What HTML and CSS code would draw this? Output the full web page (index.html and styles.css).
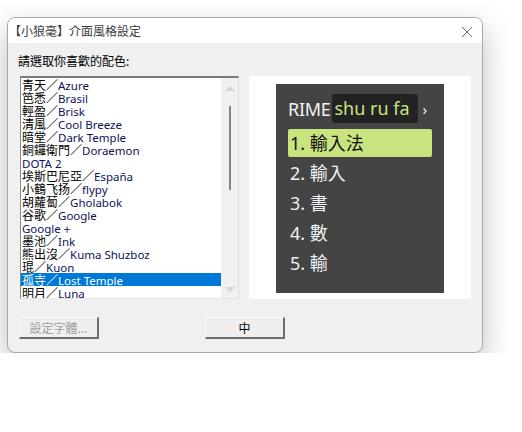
FILE: index.html
```html
<!DOCTYPE html>
<html>
<head>
<meta charset="utf-8">
<link rel="stylesheet" href="styles.css">
</head>
<body>
<div class="window">
  <div class="titlebar">
    <span class="title">【小狼毫】介面風格設定</span>
    <svg class="close" width="12" height="12" viewBox="0 0 12 12"><path d="M1 1 L11 11 M11 1 L1 11" stroke="#666" stroke-width="1" fill="none"/></svg>
  </div>
  <div class="body">
    <div class="label">請選取你喜歡的配色:</div>
    <div class="main">
      <div class="listbox">
        <div class="items">
          <div class="item">青天／<span class="lat">Azure</span></div>
          <div class="item">笆悉／<span class="lat">Brasil</span></div>
          <div class="item">輕盈／<span class="lat">Brisk</span></div>
          <div class="item">清風／<span class="lat">Cool Breeze</span></div>
          <div class="item">暗堂／<span class="lat">Dark Temple</span></div>
          <div class="item">銅鑼衛門／<span class="lat">Doraemon</span></div>
          <div class="item"><span class="lat">DOTA 2</span></div>
          <div class="item">埃斯巴尼亞／<span class="lat">España</span></div>
          <div class="item">小鶴飞扬／<span class="lat">flypy</span></div>
          <div class="item">胡蘿蔔／<span class="lat">Gholabok</span></div>
          <div class="item">谷歌／<span class="lat">Google</span></div>
          <div class="item"><span class="lat">Google＋</span></div>
          <div class="item">墨池／<span class="lat">Ink</span></div>
          <div class="item">熊出沒／<span class="lat">Kuma Shuzboz</span></div>
          <div class="item">琨／<span class="lat">Kuon</span></div>
          <div class="item selected">孤寺／<span class="lat">Lost Temple</span></div>
          <div class="item">明月／<span class="lat">Luna</span></div>
        </div>
        <div class="scrollbar">
          <div class="arrow up"></div>
          <div class="track"><div class="thumb"></div></div>
          <div class="arrow down"></div>
        </div>
      </div>
      <div class="preview">
        <div class="candbox">
          <div class="preedit">
            <span class="rime">RIME</span><span class="input">shu ru fa</span><span class="caret">›</span>
          </div>
          <div class="cand hl">1. 輸入法</div>
          <div class="cand">2. 輸入</div>
          <div class="cand">3. 書</div>
          <div class="cand">4. 數</div>
          <div class="cand">5. 輸</div>
        </div>
      </div>
    </div>
    <div class="buttons">
      <div class="btn disabled">設定字體...</div>
      <div class="btn">中</div>
    </div>
  </div>
</div>
</body>
</html>
```

FILE: styles.css
```css
html, body {
  margin: 0;
  padding: 0;
  background: #ffffff;
}
body {
  font-family: "Noto Sans CJK TC", "Noto Sans", sans-serif;
  font-size: 12px;
  color: #000;
}
.window {
  margin-left: 7px;
  margin-top: 17px;
  width: 474px;
  height: 334px;
  border: 1px solid #a8a8a8;
  border-radius: 8px;
  overflow: hidden;
  background: #f0f0f0;
  box-shadow: 0 12px 30px rgba(0,0,0,0.26);
  display: flex;
  flex-direction: column;
}
.titlebar {
  height: 25px;
  background: #ffffff;
  display: flex;
  align-items: center;
  justify-content: space-between;
  padding-left: 1px;
  padding-right: 9px;
}
.title {
  font-size: 12px;
  color: #3a3a3a;
  line-height: 14px;
  margin-top: 1px;
}
.close {
  display: block;
  margin-top: 2px;
}
.body {
  flex: 1;
  display: flex;
  flex-direction: column;
  padding-left: 12px;
}
.label {
  margin-top: 11px;
  margin-left: -2px;
  height: 14px;
  line-height: 14px;
  font-size: 12px;
  color: #000;
}
.main {
  margin-top: 8px;
  display: flex;
  gap: 10px;
  align-items: flex-start;
}
.listbox {
  width: 217px;
  height: 220px;
  border-style: solid;
  border-width: 2px 1px 1px 1px;
  border-color: #7a7a7a #dcdcdc #e6e6e6 #8a8a8a;
  background: #fff;
  display: flex;
  overflow: hidden;
}
.items {
  width: 200px;
  display: flex;
  flex-direction: column;
}
.item {
  height: 13px;
  line-height: 13px;
  white-space: nowrap;
  padding-left: 1px;
  font-size: 12px;
  color: #000;
  flex-shrink: 0;
}
.lat {
  font-family: "Noto Sans", "Open Sans", sans-serif;
  font-size: 11.5px;
  color: #0c1258;
}
.item.selected {
  background: #0078d7;
  color: #fff;
}
.item.selected .lat {
  color: #fff;
}
.scrollbar {
  width: 17px;
  background: #f0f0f0;
  display: flex;
  flex-direction: column;
  align-items: center;
}
.arrow {
  width: 0;
  height: 0;
  border-left: 5px solid transparent;
  border-right: 5px solid transparent;
  margin: 8px 0 6px;
}
.arrow.up {
  border-bottom: 5px solid #d4d4d4;
}
.arrow.down {
  border-top: 5px solid #d4d4d4;
  margin: 6px 0 6px;
}
.track {
  flex: 1;
  width: 100%;
  display: flex;
  justify-content: center;
}
.thumb {
  width: 2px;
  height: 84px;
  margin-top: 9px;
  background: #868686;
}
.preview {
  width: 222px;
  height: 223px;
  background: #fff;
  display: flex;
  justify-content: center;
  padding-top: 8px;
  box-sizing: border-box;
}
.candbox {
  width: 168px;
  height: 209px;
  background: #444444;
  box-sizing: border-box;
  padding: 10px 12px 0 12px;
  font-family: "Noto Sans", "Noto Sans CJK TC", sans-serif;
}
.preedit {
  height: 29px;
  display: flex;
  align-items: center;
  font-size: 18px;
  color: #f2f2f2;
}
.rime {
  letter-spacing: -0.3px;
  margin-right: 2px;
}
.input {
  background: #222222;
  color: #c9e37f;
  border-radius: 3px;
  height: 29px;
  line-height: 29px;
  padding: 0 1px 0 2px;
  width: 86px;
  box-sizing: border-box;
  white-space: nowrap;
}
.caret {
  margin-left: 4px;
  font-size: 15px;
  color: #f2f2f2;
}
.cand {
  height: 28px;
  line-height: 28px;
  margin-top: 2px;
  padding-left: 2px;
  font-size: 18px;
  color: #f0f0f0;
  font-family: "Noto Sans", "Noto Sans CJK TC", sans-serif;
}
.cand.hl {
  margin-top: 6px;
  background: #c9e37f;
  color: #111;
  border-radius: 2px;
  width: 144px;
  box-sizing: border-box;
}
.buttons {
  margin-top: 18px;
  display: flex;
  gap: 106px;
  margin-left: -1px;
}
.btn {
  width: 80px;
  height: 22px;
  box-sizing: border-box;
  border-style: solid;
  border-width: 1px 2px 2px 1px;
  border-color: #fafafa #6e6e6e #6e6e6e #fafafa;
  background: #efefef;
  text-align: center;
  line-height: 19px;
  font-size: 12px;
  color: #000;
}
.btn.disabled {
  color: #a0a0a0;
}
```
